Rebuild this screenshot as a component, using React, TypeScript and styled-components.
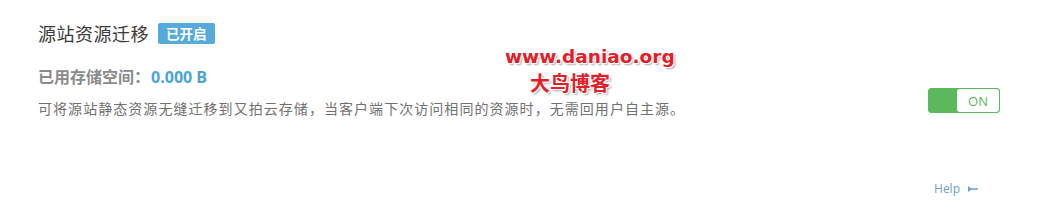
import React from 'react'
import styled, { createGlobalStyle } from 'styled-components'

const GlobalStyle = createGlobalStyle`
  html, body {
    margin: 0;
    padding: 0;
    background: #ffffff;
  }
  body {
    font-family: "Noto Sans CJK SC", "Noto Sans", sans-serif;
  }
`

const Page = styled.div`
  position: relative;
  width: 1045px;
  height: 210px;
  background: #fff;
  overflow: hidden;
`

const Panel = styled.div`
  display: flex;
  justify-content: space-between;
  padding: 22px 45px 0 38px;
`

const Info = styled.div`
  display: flex;
  flex-direction: column;
`

const TitleRow = styled.div`
  display: flex;
  align-items: center;
  gap: 9px;
  height: 22px;
`

const Title = styled.h3`
  margin: 0;
  font-size: 18px;
  font-weight: 400;
  color: #3a3a3a;
  line-height: 22px;
  letter-spacing: 0.5px;
`

const Badge = styled.span`
  display: inline-flex;
  align-items: center;
  justify-content: center;
  height: 21px;
  padding: 0 8px;
  border-radius: 2px;
  background: #55aadb;
  color: #fff;
  font-size: 13.5px;
  font-weight: 700;
`

const Stat = styled.div`
  margin-top: 22px;
  font-size: 16px;
  line-height: 20px;
  font-weight: 700;
  color: #8a8a8a;
`

const StatValue = styled.span`
  margin-left: 1px;
  color: #4aa3d6;
  font-family: "Open Sans", "Noto Sans", sans-serif;
  font-weight: 700;
`

const Desc = styled.p`
  margin: 11px 0 0;
  font-size: 14px;
  line-height: 20px;
  letter-spacing: 1.05px;
  color: #707070;
`

const Side = styled.div`
  padding-top: 66px;
`

const Toggle = styled.button<{ $on: boolean }>`
  display: flex;
  width: 72px;
  height: 25px;
  padding: 0;
  border: 1px solid ${({ $on }) => ($on ? '#5cb85c' : '#ccc')};
  border-radius: 3px;
  background: ${({ $on }) => ($on ? '#5cb85c' : '#eee')};
  overflow: hidden;
  cursor: pointer;
`

const ToggleTrack = styled.span`
  width: 28px;
`

const ToggleKnob = styled.span`
  flex: 1;
  display: flex;
  align-items: center;
  justify-content: center;
  background: #fff;
  border-radius: 3px;
  color: #5cb85c;
  font-family: "Open Sans", "Noto Sans", sans-serif;
  font-size: 13px;
`

const Footer = styled.div`
  display: flex;
  justify-content: flex-end;
  padding: 62px 67px 0 0;
`

const HelpLink = styled.a`
  display: inline-flex;
  align-items: center;
  gap: 8px;
  font-family: "Open Sans", "Noto Sans", sans-serif;
  font-size: 12px;
  color: #6a9fd6;
  text-decoration: none;
`

const Watermark = styled.div`
  position: absolute;
  left: 505px;
  top: 43px;
  display: flex;
  flex-direction: column;
  color: #e3202a;
  font-weight: 700;
  text-shadow: 1px 1px 0 #fff, -1px -1px 0 #fff, 1px -1px 0 #fff, -1px 1px 0 #fff, 2px 2px 2px rgba(0, 0, 0, 0.35);
  pointer-events: none;
`

const MarkUrl = styled.span`
  font-family: "DejaVu Sans", sans-serif;
  font-size: 18.5px;
  line-height: 28px;
`

const MarkName = styled.span`
  margin-left: 25px;
  font-size: 20px;
  line-height: 24px;
`

export default function App() {
  return (
    <Page>
      <GlobalStyle />
      <Panel>
        <Info>
          <TitleRow>
            <Title>源站资源迁移</Title>
            <Badge>已开启</Badge>
          </TitleRow>
          <Stat>
            已用存储空间：<StatValue>0.000 B</StatValue>
          </Stat>
          <Desc>可将源站静态资源无缝迁移到又拍云存储，当客户端下次访问相同的资源时，无需回用户自主源。</Desc>
        </Info>
        <Side>
          <Toggle $on>
            <ToggleTrack />
            <ToggleKnob>ON</ToggleKnob>
          </Toggle>
        </Side>
      </Panel>
      <Footer>
        <HelpLink href="#">
          Help
          <svg width="10" height="6" viewBox="0 0 10 6">
            <path d="M0 0 L4 3 L0 6 Z M3 2.2 H10 V3.8 H3 Z" fill="#6a9fd6" />
          </svg>
        </HelpLink>
      </Footer>
      <Watermark>
        <MarkUrl>www.daniao.org</MarkUrl>
        <MarkName>大鸟博客</MarkName>
      </Watermark>
    </Page>
  )
}
